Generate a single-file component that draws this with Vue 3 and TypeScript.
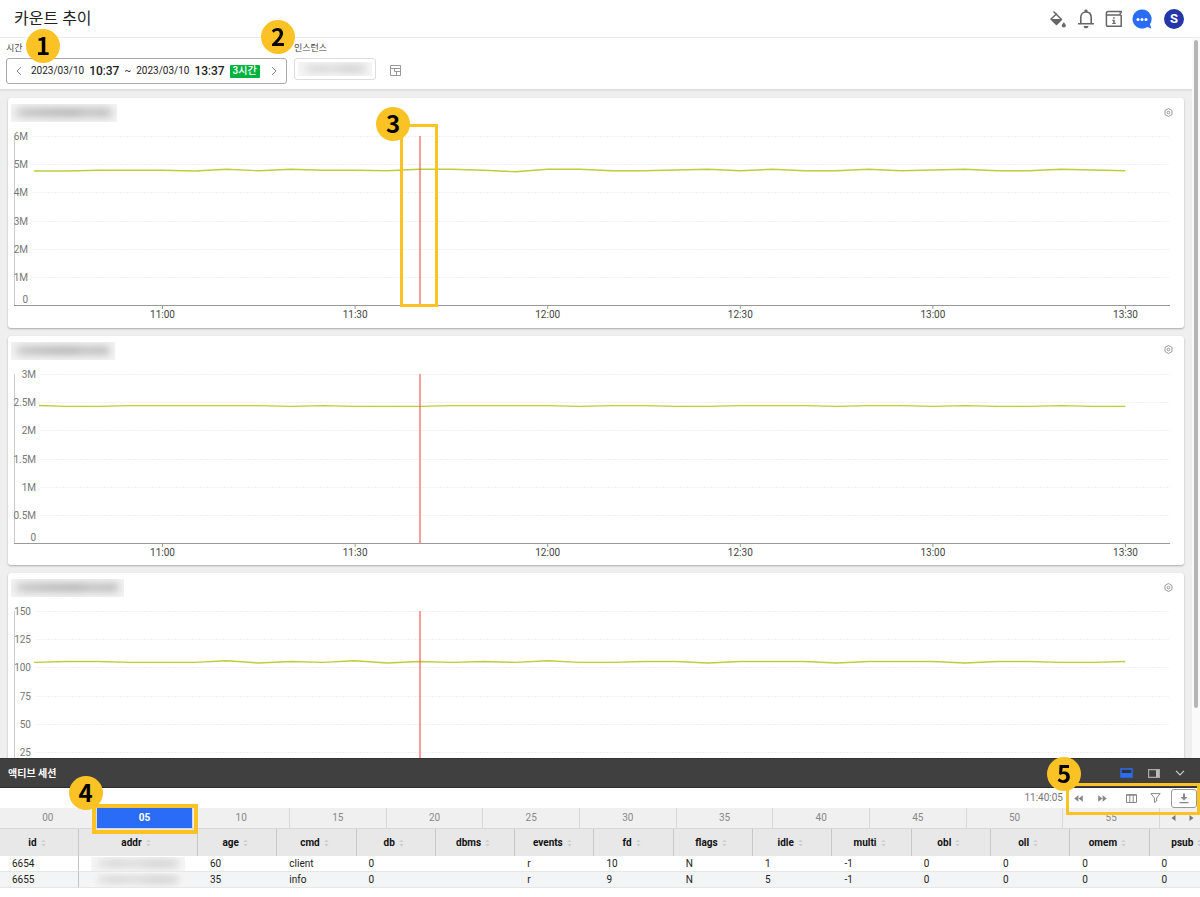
<script setup lang="ts">
import { ref } from 'vue'

interface Chart {
  id: string
  maskWidth: number
  ticks: string[]
  labelRight: number
  start: number
  points: number[]
}

const SPAN = 1156
const FIRST = 20
const STEP = 32.1
const TOP = 6.5
const PITCH = 28.17

const charts: Chart[] = [
  {
    id: 'first',
    maskWidth: 106,
    ticks: ['6M', '5M', '4M', '3M', '2M', '1M', '0'],
    labelRight: 14,
    start: 20,
    points: [41, 41, 40.2, 40.2, 40.2, 41, 39.3, 40.8, 39.3, 40.2, 40.2, 40.8, 39.3, 39.3, 40.2, 41.7, 39.3, 39.3,
      40.8, 40.8, 40, 39.3, 40.8, 39.3, 40.8, 40.8, 39.3, 40.8, 40, 39.3, 40.8, 40.8, 39.3, 40, 40.8],
  },
  {
    id: 'second',
    maskWidth: 104,
    ticks: ['3M', '2.5M', '2M', '1.5M', '1M', '0.5M', '0'],
    labelRight: 22,
    start: 25,
    points: [37.5, 38.4, 38.4, 37.6, 37.6, 37.6, 37.6, 37.6, 38.4, 37.6, 38.4, 38.4, 38.4, 37.6, 37.6, 37.6, 37.6, 38.4,
      37.6, 37.6, 38.4, 38.4, 37.6, 37.6, 37.6, 38.4, 37.6, 37.6, 38.4, 37.6, 38.4, 38.4, 37.6, 38.4, 38.4],
  },
  {
    id: 'third',
    maskWidth: 113,
    ticks: ['150', '125', '100', '75', '50', '25', '0'],
    labelRight: 17,
    start: 20,
    points: [57.4, 56.5, 56.5, 57.4, 57.4, 57.4, 55.8, 58, 56.5, 57.4, 55.8, 58, 56.5, 57.4, 56.5, 57.4, 55.8, 57.4,
      57.4, 56.5, 56.5, 58, 56.5, 56.5, 56.5, 58, 56.5, 56.5, 56.5, 58, 56.5, 56.5, 57.4, 57.4, 56.5],
  },
]

const hours = ['11:00', '11:30', '12:00', '12:30', '13:00', '13:30']
const pct = (x: number) => `${(x / SPAN) * 100}%`
const hourX = (i: number) => pct(148.5 + i * 192.6)
const gridY = (i: number) => Math.floor(TOP + i * PITCH) + 0.5
const labelY = (i: number) => (i === 6 ? 173 : gridY(i) + 3)
const line = (c: Chart) => c.points.map((y, i) => `${i ? FIRST + i * STEP : c.start},${y}`).join(' ')

const slots = ['00', '05', '10', '15', '20', '25', '30', '35', '40', '45', '50', '55']
const activeSlot = ref('05')

const columns = ['id', 'addr', 'age', 'cmd', 'db', 'dbms', 'events', 'fd', 'flags', 'idle', 'multi', 'obl', 'oll', 'omem', 'psub']
const rows: Record<string, string>[] = [
  { id: '6654', age: '60', cmd: 'client', db: '0', events: 'r', fd: '10', flags: 'N', idle: '1', multi: '-1', obl: '0', oll: '0', omem: '0', psub: '0' },
  { id: '6655', age: '35', cmd: 'info', db: '0', events: 'r', fd: '9', flags: 'N', idle: '5', multi: '-1', obl: '0', oll: '0', omem: '0', psub: '0' },
]
</script>

<template>
  <div class="page">
    <header class="top">
      <h1>카운트 추이</h1>
      <nav class="tools">
        <button aria-label="테마">
          <svg width="18" height="18" viewBox="0 0 18 18">
            <path d="M4.5 1.5 L12.5 9.5 L7.5 14.5 L2 9 L8 3.5" fill="none" stroke="#666" stroke-width="1.5" stroke-linejoin="round" />
            <path d="M1.5 9 H13 L7.5 14.8Z" fill="#666" />
            <path d="M14.8 12.2 q2 2.2 2 3.2 a2 2 0 0 1 -4 0 q0 -1 2 -3.2Z" fill="#666" />
          </svg>
        </button>
        <button aria-label="알림">
          <svg width="18" height="20" viewBox="0 0 18 20">
            <path d="M1 14.8 H17 M3.8 14.5 V8.5 C3.8 5 6 3 9 3 S14.2 5 14.2 8.5 V14.5" fill="none" stroke="#666" stroke-width="1.6" />
            <path d="M7.4 3 V1.8 a1.6 1.3 0 0 1 3.2 0 V3Z M6.5 17 H11.5 a2.5 2.2 0 0 1 -5 0Z" fill="#666" />
          </svg>
        </button>
        <button aria-label="안내">
          <svg width="18" height="18" viewBox="0 0 18 18">
            <path d="M16.2 5 V16.2 H2.8 Q1.4 16.2 1.4 14.8 V3.4 Q1.4 1.5 3.2 1.5 H16.2 V3 M1.6 5 H16.2" fill="none" stroke="#666" stroke-width="1.5" />
            <path d="M14.5 2 L16.5 3.5 L14.5 5" fill="#666" />
            <path d="M8.1 7.3 h1.6 v1.5 h-1.6Z M7.2 9.7 H9.7 V13 H10.7 V14.1 H7.2 V13 H8.2 V10.8 H7.2Z" fill="#666" />
          </svg>
        </button>
        <button aria-label="채팅">
          <svg width="20" height="20" viewBox="0 0 20 20">
            <path d="M10 .5 A9.5 9.5 0 1 0 15.3 17.9 L19.3 19.4 L18 15.2 A9.5 9.5 0 0 0 10 .5Z" fill="#2a6cf6" />
            <g fill="#fff"><circle cx="6" cy="10.5" r="1.5" /><circle cx="10" cy="10.5" r="1.5" /><circle cx="14" cy="10.5" r="1.5" /></g>
          </svg>
        </button>
        <button class="avatar" aria-label="계정">S</button>
      </nav>
    </header>

    <main class="body">
      <div class="scroll">
        <section class="filters">
          <div class="field">
            <span class="label">시간</span>
            <div class="range">
              <button aria-label="이전"><svg width="6" height="10" viewBox="0 0 6 10"><path d="M5 1 L1 5 L5 9" /></svg></button>
              <span>2023/03/10</span>
              <b>10<i>:</i>37</b>
              <span>~</span>
              <span>2023/03/10</span>
              <b>13<i>:</i>37</b>
              <span class="span">3시간</span>
              <button aria-label="다음"><svg width="6" height="10" viewBox="0 0 6 10"><path d="M1 1 L5 5 L1 9" /></svg></button>
            </div>
          </div>
          <div class="field">
            <span class="label">인스턴스</span>
            <button class="instance" aria-label="인스턴스"><span class="mask pale"></span></button>
          </div>
          <button class="layout" aria-label="레이아웃">
            <svg width="11" height="11" viewBox="0 0 11 11"><path d="M.5 .5 H10.5 V10.5 H.5Z M.5 3.5 H10.5 M4.5 3.5 V6.5 H10.5 M6.5 6.5 V10.5" fill="none" stroke="#999" /></svg>
          </button>
        </section>

        <section class="cards">
          <article v-for="(c, ci) in charts" :key="c.id" class="card">
            <div class="card-head">
              <span class="mask" :style="{ width: c.maskWidth + 'px' }"></span>
              <button aria-label="설정">
                <svg width="9" height="9" viewBox="0 0 9 9"><path d="M4.5 .5 L8 2.5 V6.5 L4.5 8.5 L1 6.5 V2.5Z" fill="none" stroke="#999" /><circle cx="4.5" cy="4.5" r="1.3" fill="none" stroke="#999" /></svg>
              </button>
            </div>
            <div class="plot">
              <svg class="chart">
                <line v-for="i in 6" :key="i" :x1="c.labelRight + 5" x2="100%" :y1="gridY(i - 1)" :y2="gridY(i - 1)" class="grid" />
                <line x1="0.5" x2="0.5" y1="6" y2="175" class="side" />
                <line x1="0" x2="100%" y1="175.5" y2="175.5" class="base" />
                <text v-for="(t, i) in c.ticks" :key="t" :x="c.labelRight" :y="labelY(i)" class="tick end">{{ t }}</text>
                <g v-for="(h, i) in hours" :key="h">
                  <line :x1="hourX(i)" :x2="hourX(i)" y1="176" y2="179" class="base" />
                  <text :x="hourX(i)" y="188" class="tick mid">{{ h }}</text>
                </g>
                <svg x="0" y="0" width="100%" height="200" viewBox="0 0 1156 200" preserveAspectRatio="none">
                  <polyline :points="line(c)" class="series" />
                </svg>
                <line :x1="pct(406)" :x2="pct(406)" y1="6" y2="175" class="cursor" />
              </svg>
              <div v-if="ci === 0" class="frame-cursor" :style="{ left: pct(386) }"><span class="pin">3</span></div>
            </div>
          </article>
        </section>
      </div>
      <div class="bar"></div>
    </main>

    <section class="panel">
      <header class="panel-head">
        <h2>액티브 세션</h2>
        <button aria-label="하단 배치"><svg width="13" height="10" viewBox="0 0 13 10"><path d="M1 1 H12 V9 H1Z" fill="#333" stroke="#2a6cf6" stroke-width="1.4" /><path d="M1 5 H12 V9 H1Z" fill="#2a6cf6" /></svg></button>
        <button aria-label="우측 배치"><svg width="12" height="9" viewBox="0 0 12 9"><path d="M.6 .6 H11.4 V8.4 H.6Z" fill="none" stroke="#aaa" stroke-width="1.2" /><path d="M8 1 H11 V8 H8Z" fill="#bbb" /></svg></button>
        <button aria-label="접기"><svg width="10" height="6" viewBox="0 0 10 6"><path d="M1 .8 L5 4.8 L9 .8" fill="none" stroke="#ccc" stroke-width="1.2" /></svg></button>
      </header>
      <div class="strip">
        <time>11:40:05</time>
        <button aria-label="뒤로"><svg width="9" height="7" viewBox="0 0 9 7"><path d="M4.4 .2 V6.8 L.2 3.5Z M8.8 .2 V6.8 L4.6 3.5Z" fill="#888" /></svg></button>
        <button aria-label="앞으로"><svg width="9" height="7" viewBox="0 0 9 7"><path d="M.2 .2 V6.8 L4.4 3.5Z M4.6 .2 V6.8 L8.8 3.5Z" fill="#888" /></svg></button>
        <button class="cols" aria-label="컬럼"><svg width="11" height="9" viewBox="0 0 11 9"><path d="M.5 .5 H10.5 V8.5 H.5Z M.5 1.2 H10.5 M3.8 .5 V8.5 M7.2 .5 V8.5" fill="none" stroke="#888" /></svg></button>
        <button aria-label="필터"><svg width="11" height="10" viewBox="0 0 11 10"><path d="M.9 .6 H10.1 L6.7 5 V8 L4.4 9.4 V5Z" fill="none" stroke="#888" stroke-linejoin="round" /></svg></button>
        <button class="download" aria-label="다운로드"><svg width="10" height="11" viewBox="0 0 10 11"><path d="M4 .5 H6 V4 H8.5 L5 7.5 L1.5 4 H4Z M.5 9 H9.5 V10.3 H.5Z" fill="#888" /></svg></button>
        <div class="frame-strip"><span class="pin">5</span></div>
      </div>
      <div class="slots">
        <div v-for="s in slots" :key="s" class="slot">
          <button :class="{ on: s === activeSlot }" @click="activeSlot = s">{{ s }}</button>
          <div v-if="s === '05'" class="frame-slot"><span class="pin">4</span></div>
        </div>
        <div class="arrows">
          <button aria-label="이전 구간"><svg width="5" height="6" viewBox="0 0 5 6"><path d="M4.5 0 V6 L.5 3Z" fill="#777" /></svg></button>
          <button aria-label="다음 구간"><svg width="5" height="6" viewBox="0 0 5 6"><path d="M.5 0 V6 L4.5 3Z" fill="#777" /></svg></button>
        </div>
      </div>
      <div class="sheet">
        <table>
          <thead>
            <tr>
              <th v-for="c in columns" :key="c" :class="c" scope="col">
                <button>{{ c }}<svg width="5" height="8" viewBox="0 0 5 8"><path d="M.3 3 L2.5 .5 L4.7 3Z M.3 5 L2.5 7.5 L4.7 5Z" fill="#ccc" /></svg></button>
              </th>
            </tr>
          </thead>
          <tbody>
            <tr v-for="r in rows" :key="r.id">
              <td v-for="c in columns" :key="c" :class="c">
                <span v-if="c === 'addr'" class="mask pale"></span>
                <template v-else>{{ r[c] }}</template>
              </td>
            </tr>
          </tbody>
        </table>
      </div>
    </section>

    <span class="pin pin-time">1</span>
    <span class="pin pin-instance">2</span>
  </div>
</template>

<style>
body {
  background: #fff;
}
</style>

<style scoped>
* {
  box-sizing: border-box;
}
.page {
  position: relative;
  height: 100vh;
  display: flex;
  flex-direction: column;
  overflow: hidden;
  font: 10px/12px Roboto, "Noto Sans CJK KR", sans-serif;
  color: #222;
}
button {
  display: flex;
  align-items: center;
  justify-content: center;
  padding: 0;
  border: 0;
  background: none;
  font: inherit;
  color: inherit;
  cursor: pointer;
}
h1,
h2 {
  margin: 0;
}
.top {
  flex: none;
  height: 38px;
  display: flex;
  align-items: center;
  padding: 0 16px 0 14px;
  border-bottom: 1px solid #ebebeb;
}
h1 {
  flex: 1;
  font-size: 16px;
  line-height: 24px;
  font-weight: 400;
}
.tools {
  display: flex;
  align-items: center;
  gap: 8px;
}
.tools button {
  width: 20px;
  height: 20px;
}
.tools .avatar {
  margin-left: 4px;
  border-radius: 50%;
  background: #2436a8;
  color: #fff;
  font-size: 13px;
  font-weight: 700;
}
.body {
  flex: 1;
  min-height: 0;
  display: flex;
  overflow: hidden;
}
.scroll {
  flex: 1;
  min-width: 0;
  overflow-y: auto;
  scrollbar-width: none;
  background: #efefef;
}
.bar {
  flex: none;
  width: 8px;
  padding: 2px 2px 50px;
  background: #fafafa;
}
.bar::before {
  content: "";
  display: block;
  height: 100%;
  border-radius: 2px;
  background: #b5b5b5;
}
.filters {
  display: flex;
  align-items: flex-start;
  gap: 7px;
  height: 52px;
  padding: 4px 6px 0;
  background: #fff;
  border-bottom: 1px solid #dcdcdc;
  box-shadow: 0 1px 1px #e4e4e4;
}
.label {
  display: block;
  height: 16px;
  font-size: 9px;
  line-height: 13px;
  color: #444;
}
.range {
  display: flex;
  align-items: center;
  gap: 5px;
  width: 281px;
  height: 26px;
  padding: 0 8px;
  border: 1px solid #aaa;
  border-radius: 3px;
}
.range button {
  width: 8px;
  height: 20px;
}
.range button:first-child {
  margin-right: 3px;
}
.range button:last-child {
  margin-left: auto;
}
.range path {
  fill: none;
  stroke: #888;
}
.range b {
  font-size: 12px;
  font-weight: 500;
}
.range i {
  font-style: normal;
  font-weight: 400;
}
.span {
  width: 30px;
  height: 13px;
  border-radius: 1px;
  background: #00b341;
  color: #fff;
  font-weight: 500;
  text-align: center;
}
.instance {
  width: 82px;
  height: 22px;
  border: 1px solid #ddd;
  border-radius: 3px;
}
.instance .mask {
  width: 74px;
}
.layout {
  margin: 22px 0 0 6px;
  width: 12px;
  height: 12px;
}
.mask {
  display: block;
  height: 18px;
  overflow: hidden;
  background: #f3f3f3;
}
.mask::before {
  content: "";
  display: block;
  height: 7px;
  margin: 5px 6px;
  background: linear-gradient(90deg, #bbb, #aaa 30%, #a2a2a2 60%, #b4b4b4 75%, #aaa);
  filter: blur(4px);
}
.mask.pale {
  height: 14px;
  background: #f7f7f7;
}
.mask.pale::before {
  margin: 3px 6px;
  background: linear-gradient(90deg, #ddd, #ccc 25%, #d6d6d6 40%, #c6c6c6 75%, #d0d0d0);
}
.cards {
  display: grid;
  grid-template-rows: repeat(3, 1fr);
  gap: 8px;
  height: 705px;
  margin: 8px;
}
.card {
  background: #fff;
  border-radius: 3px;
  box-shadow: 0 1px 2px #aaa;
}
.card-head {
  display: flex;
  align-items: flex-start;
  justify-content: space-between;
  height: 32px;
  padding: 6px 11px 0 3px;
}
.card-head button {
  width: 10px;
  height: 16px;
}
.plot {
  position: relative;
  margin: 0 14px 0 6px;
}
.chart {
  display: block;
  width: 100%;
  height: 194px;
  overflow: visible;
}
.grid {
  stroke: #f1f1f1;
  stroke-dasharray: 2 1;
}
.side {
  stroke: #ccc;
}
.base {
  stroke: #999;
}
.tick {
  font-size: 10px;
  fill: #777;
}
.end {
  text-anchor: end;
}
.mid {
  text-anchor: middle;
  fill: #444;
}
.series {
  fill: none;
  stroke: #bfcc3c;
  stroke-width: 1.4;
  vector-effect: non-scaling-stroke;
}
.cursor {
  stroke: #ff4d48;
  stroke-opacity: 0.55;
  stroke-width: 2;
}
.pin {
  position: absolute;
  width: 34px;
  height: 34px;
  border-radius: 50%;
  background: #fac224;
  color: #000;
  font: 700 24px/32px "Noto Sans CJK KR", sans-serif;
  text-align: center;
}
.pin-time {
  left: 26px;
  top: 29px;
}
.pin-instance {
  left: 261px;
  top: 20px;
}
.frame-cursor,
.frame-strip,
.frame-slot {
  position: absolute;
  border: 3px solid #fac224;
  pointer-events: none;
}
.frame-cursor {
  top: -6px;
  width: 38px;
  height: 183px;
}
.frame-cursor .pin {
  left: -27px;
  top: -20px;
}
.panel {
  position: relative;
  flex: none;
  height: 139px;
  background: #fff;
}
.panel-head {
  display: flex;
  align-items: center;
  height: 30px;
  padding: 0 10px 0 8px;
  background: #404040;
  border-bottom: 1px solid #2c2c2c;
  border-top: 1px solid #333;
}
.panel-head h2 {
  flex: 1;
  font-size: 10px;
  line-height: 15px;
  color: #fff;
}
.panel-head button {
  width: 20px;
  height: 20px;
  margin-left: 8px;
}
.panel-head button:last-child {
  margin-left: 6px;
}
.strip {
  position: relative;
  z-index: 2;
  display: flex;
  align-items: center;
  justify-content: flex-end;
  height: 20px;
  padding-right: 3px;
}
.strip time {
  margin-right: 3px;
  color: #777;
}
.strip button {
  width: 24px;
  height: 18px;
}
.strip .cols {
  margin-left: 5px;
}
.strip .download {
  width: 26px;
  height: 19px;
  margin-left: 4px;
  border: 1px solid #999;
  border-radius: 3px;
}
.frame-strip {
  top: -5px;
  right: 0;
  width: 134px;
  height: 32px;
}
.frame-strip .pin {
  left: -22px;
  top: -29px;
}
.slots {
  display: flex;
  height: 21px;
  background: #f0f0f0;
  border-bottom: 1px solid #d8d8d8;
  color: #888;
}
.slot {
  position: relative;
  flex: 1;
  border-right: 1px solid #d8d8d8;
}
.slot button {
  width: 100%;
  height: 20px;
}
.slot .on {
  background: #2a6cf6;
  color: #fff;
  font-weight: 700;
}
.frame-slot {
  left: -5px;
  top: -4px;
  width: 106px;
  height: 30px;
  border-width: 4px;
}
.frame-slot .pin {
  left: -27px;
  top: -32px;
}
.arrows {
  width: 40px;
  display: flex;
  align-items: center;
  justify-content: space-around;
  padding-left: 4px;
}
.arrows button {
  width: 18px;
  height: 20px;
}
.sheet {
  overflow: hidden;
}
table {
  width: calc(100% + 29px);
  table-layout: fixed;
  border-collapse: separate;
  border-spacing: 0;
}
th {
  height: 27px;
  padding: 0 4px 0 0;
  background: #e8e8e8;
  border-right: 1px solid #c8c8c8;
  font-weight: 700;
  color: #111;
}
th button {
  width: 100%;
  gap: 4px;
}
th.id {
  width: 79px;
}
th.addr {
  width: 119px;
}
td {
  height: 16px;
  padding: 0 0 0 12px;
  line-height: 15px;
  border-bottom: 1px solid #e6e6e6;
  white-space: nowrap;
}
td.id {
  border-right: 1px solid #c4c4c4;
}
tr:nth-child(2) td {
  background: #f3f4f6;
}
td .mask {
  width: 94px;
}
</style>
